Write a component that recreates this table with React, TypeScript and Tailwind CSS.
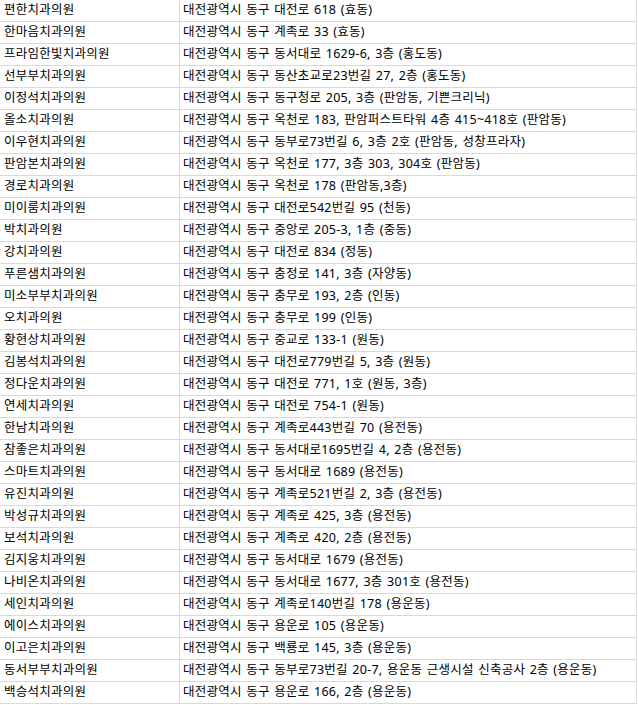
// 대전 동구 치과의원 목록 (스프레드시트 모양)
const rows: [string, string][] = [
  ['편한치과의원', '대전광역시 동구 대전로 618 (효동)'],
  ['한마음치과의원', '대전광역시 동구 계족로 33 (효동)'],
  ['프라임한빛치과의원', '대전광역시 동구 동서대로 1629-6, 3층 (홍도동)'],
  ['선부부치과의원', '대전광역시 동구 동산초교로23번길 27, 2층 (홍도동)'],
  ['이정석치과의원', '대전광역시 동구 동구청로 205, 3층 (판암동, 기쁜크리닉)'],
  ['올소치과의원', '대전광역시 동구 옥천로 183, 판암퍼스트타워 4층 415~418호 (판암동)'],
  ['이우현치과의원', '대전광역시 동구 동부로73번길 6, 3층 2호 (판암동, 성창프라자)'],
  ['판암본치과의원', '대전광역시 동구 옥천로 177, 3층 303, 304호 (판암동)'],
  ['경로치과의원', '대전광역시 동구 옥천로 178 (판암동,3층)'],
  ['미이룸치과의원', '대전광역시 동구 대전로542번길 95 (천동)'],
  ['박치과의원', '대전광역시 동구 중앙로 205-3, 1층 (중동)'],
  ['강치과의원', '대전광역시 동구 대전로 834 (정동)'],
  ['푸른샘치과의원', '대전광역시 동구 충정로 141, 3층 (자양동)'],
  ['미소부부치과의원', '대전광역시 동구 충무로 193, 2층 (인동)'],
  ['오치과의원', '대전광역시 동구 충무로 199 (인동)'],
  ['황현상치과의원', '대전광역시 동구 중교로 133-1 (원동)'],
  ['김봉석치과의원', '대전광역시 동구 대전로779번길 5, 3층 (원동)'],
  ['정다운치과의원', '대전광역시 동구 대전로 771, 1호 (원동, 3층)'],
  ['연세치과의원', '대전광역시 동구 대전로 754-1 (원동)'],
  ['한남치과의원', '대전광역시 동구 계족로443번길 70 (용전동)'],
  ['참좋은치과의원', '대전광역시 동구 동서대로1695번길 4, 2층 (용전동)'],
  ['스마트치과의원', '대전광역시 동구 동서대로 1689 (용전동)'],
  ['유진치과의원', '대전광역시 동구 계족로521번길 2, 3층 (용전동)'],
  ['박성규치과의원', '대전광역시 동구 계족로 425, 3층 (용전동)'],
  ['보석치과의원', '대전광역시 동구 계족로 420, 2층 (용전동)'],
  ['김지웅치과의원', '대전광역시 동구 동서대로 1679 (용전동)'],
  ['나비온치과의원', '대전광역시 동구 동서대로 1677, 3층 301호 (용전동)'],
  ['세인치과의원', '대전광역시 동구 계족로140번길 178 (용운동)'],
  ['에이스치과의원', '대전광역시 동구 용운로 105 (용운동)'],
  ['이고은치과의원', '대전광역시 동구 백룡로 145, 3층 (용운동)'],
  ['동서부부치과의원', '대전광역시 동구 동부로73번길 20-7, 용운동 근생시설 신축공사 2층 (용운동)'],
  ['백승석치과의원', '대전광역시 동구 용운로 166, 2층 (용운동)'],
];

export default function App() {
  return (
    <div className="w-[638px] bg-white font-['Noto_Sans','Noto_Sans_CJK_KR',sans-serif] text-[12.5px] tracking-[0.25px] text-black [word-spacing:1px]">
      <div className="w-[637px] border-r border-[#d9d9d9]">
        {rows.map(([name, addr]) => (
          <div key={name} className="flex h-[22px] border-b border-[#d9d9d9]">
            <div className="flex w-[180px] shrink-0 items-center border-r border-[#d9d9d9] pl-[4px] leading-none">
              {name}
            </div>
            <div className="flex flex-1 items-center pl-[3px] leading-none whitespace-pre">{addr}</div>
          </div>
        ))}
      </div>
    </div>
  );
}
